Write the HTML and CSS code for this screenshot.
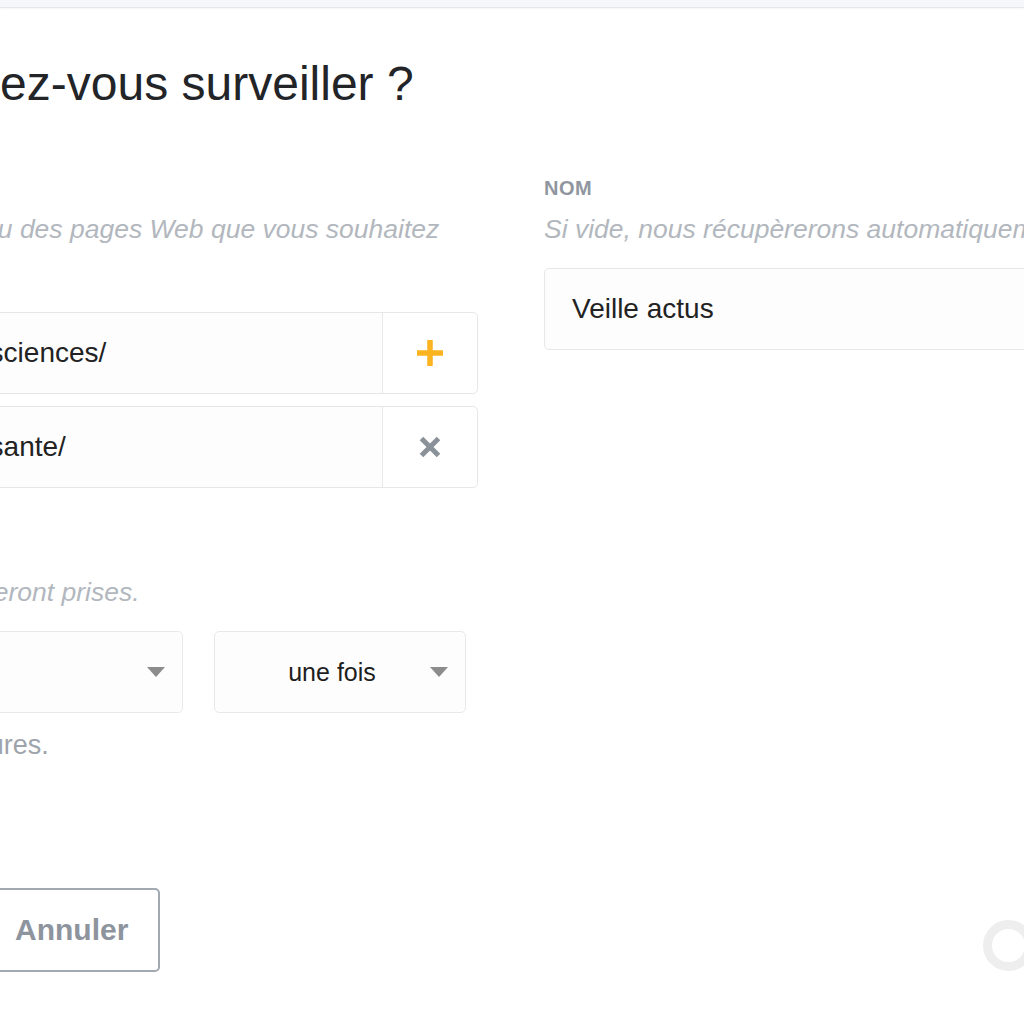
FILE: index.html
```html
<!DOCTYPE html>
<html lang="fr">
<head>
<meta charset="utf-8">
<title>Nouvelle veille</title>
<link rel="stylesheet" href="styles.css">
</head>
<body>
<div class="topbar"></div>
<main class="page">
  <h1 class="title">Que désirez-vous surveiller ?</h1>
  <div class="columns">
    <div class="col">
      <section class="field">
        <div class="label">URL</div>
        <p class="help">URL de la page ou des pages Web que vous souhaitez surveiller.</p>
        <div class="url-list">
          <div class="url-row">
            <div class="url-input">https://cnrs.fr/sciences/</div>
            <button class="url-btn" type="button" aria-label="Ajouter une URL">
              <svg class="icon-plus" width="28" height="28" viewBox="0 0 28 28"><path d="M14 1v26M1 14h26" stroke="#fbb41f" stroke-width="5.5" fill="none"/></svg>
            </button>
          </div>
          <div class="url-row">
            <div class="url-input">https://cnrs.fr/sante/</div>
            <button class="url-btn" type="button" aria-label="Supprimer l'URL">
              <svg class="icon-x" width="22" height="22" viewBox="0 0 22 22"><path d="M2.5 2.5l17 17M19.5 2.5l-17 17" stroke="#8a9199" stroke-width="5" fill="none"/></svg>
            </button>
          </div>
        </div>
      </section>
      <section class="field field-freq">
        <div class="label">Fréquence</div>
        <p class="help">Les empreintes seront prises.</p>
        <div class="selects">
          <div class="select select-a">
            <span class="select-value">24h</span>
            <svg class="caret" width="18" height="10" viewBox="0 0 18 10"><path d="M0 0h18L9 10z" fill="#8c8c8c"/></svg>
          </div>
          <div class="select select-b">
            <span class="select-value">une fois</span>
            <svg class="caret" width="18" height="10" viewBox="0 0 18 10"><path d="M0 0h18L9 10z" fill="#8c8c8c"/></svg>
          </div>
        </div>
        <p class="note">Toutes les 24 heures.</p>
      </section>
      <div class="actions">
        <button class="btn btn-primary" type="button">Ajouter</button>
        <button class="btn btn-secondary" type="button">Annuler</button>
      </div>
    </div>
    <div class="col">
      <section class="field">
        <div class="label">Nom</div>
        <p class="help">Si vide, nous récupèrerons automatiquement le titre.</p>
        <div class="text-input">Veille actus</div>
      </section>
    </div>
  </div>
</main>
<div class="loader" aria-hidden="true"></div>
</body>
</html>
```
FILE: styles.css
```css
* { box-sizing: border-box; }

html, body {
  margin: 0;
  padding: 0;
  background: #ffffff;
  overflow: hidden;
}

body {
  font-family: "Liberation Sans", Arial, sans-serif;
  color: #222428;
}

.topbar {
  height: 8px;
  background: #f6f7f9;
  border-bottom: 1px solid #e4e6e9;
  box-shadow: 0 1px 2px rgba(0, 0, 0, 0.04);
}

.page {
  margin-left: -208px;
}

.title {
  margin: 48px 0 0;
  font-size: 48px;
  line-height: 56px;
  font-weight: 400;
  color: #222428;
  white-space: nowrap;
}

.columns {
  display: grid;
  grid-template-columns: 686px 686px;
  column-gap: 66px;
  margin-top: 64px;
}

.field-freq {
  margin-top: 51px;
}

.label {
  font-size: 20px;
  line-height: 24px;
  font-weight: 700;
  letter-spacing: 0.5px;
  text-transform: uppercase;
  color: #8f96a0;
}

.help {
  margin: 7px 0 17px;
  font-size: 26.5px;
  line-height: 44px;
  font-style: italic;
  color: #b2b7be;
}

.url-list {
  display: flex;
  flex-direction: column;
  gap: 12px;
}

.url-row {
  display: flex;
  height: 82px;
  border: 1px solid #e5e7ea;
  border-radius: 5px;
  background: #fdfdfd;
}

.url-input {
  flex: 1;
  display: flex;
  align-items: center;
  padding-left: 27px;
  font-size: 28px;
  color: #222;
  white-space: nowrap;
  overflow: hidden;
}

.url-btn {
  width: 95px;
  display: flex;
  align-items: center;
  justify-content: center;
  border: 0;
  border-left: 1px solid #e8e9eb;
  border-radius: 0 5px 5px 0;
  background: #ffffff;
  padding: 0;
  cursor: pointer;
}

.text-input {
  height: 82px;
  display: flex;
  align-items: center;
  padding-left: 27px;
  border: 1px solid #e5e7ea;
  border-radius: 5px;
  background: #fdfdfd;
  font-size: 28px;
  color: #222;
}

.selects {
  display: flex;
  gap: 31px;
}

.select {
  height: 82px;
  display: flex;
  align-items: center;
  padding: 0 17px 0 19px;
  border: 1px solid #e8e9eb;
  border-radius: 5px;
  background: #fdfdfd;
}

.select-a { width: 391px; }
.select-b { width: 252px; }

.select-value {
  flex: 1;
  text-align: center;
  font-size: 25px;
  color: #1e1e1e;
}

.caret {
  flex: none;
}

.note {
  margin: 17px 0 0;
  font-size: 27px;
  line-height: 30px;
  color: #9ea4ac;
}

.actions {
  display: flex;
  gap: 22px;
  margin-top: 128px;
}

.btn {
  height: 84px;
  padding: 0 30px;
  border: 2px solid #a3a9b1;
  border-radius: 5px;
  font-family: "Liberation Sans", Arial, sans-serif;
  font-size: 30px;
  font-weight: 700;
  line-height: 80px;
  background: #ffffff;
  color: #8d949d;
  cursor: pointer;
}

.btn-primary {
  background: #fbb41f;
  border-color: #fbb41f;
  color: #ffffff;
}

.loader {
  position: fixed;
  left: 983px;
  top: 920px;
  width: 51px;
  height: 51px;
  border: 9px solid #eeeeee;
  border-radius: 50%;
}
```
